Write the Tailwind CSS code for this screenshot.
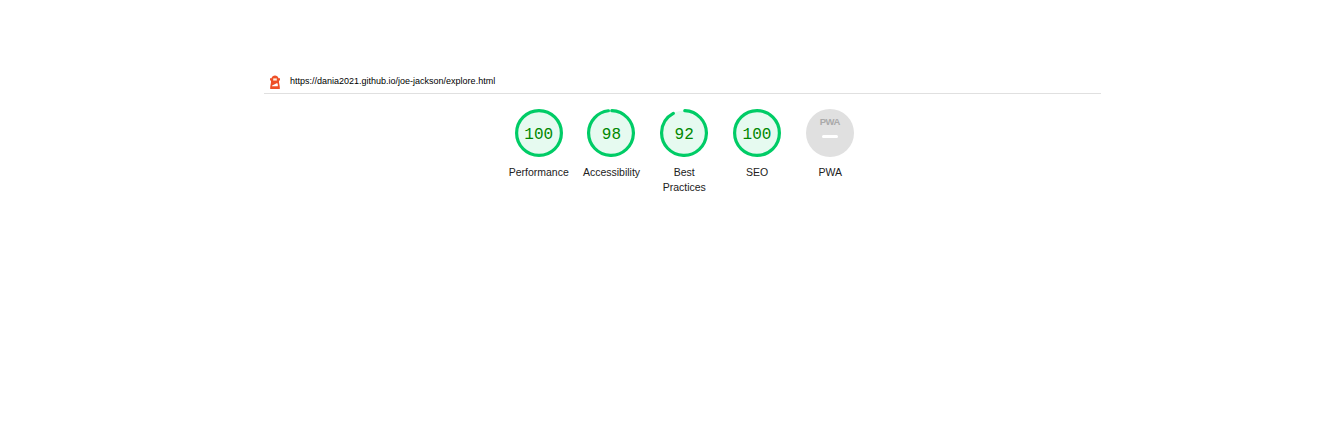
<!DOCTYPE html>
<html lang="en">
<head>
<meta charset="utf-8">
<title>Lighthouse Report</title>
<script src="https://cdn.jsdelivr.net/npm/@tailwindcss/browser@4"></script>
</head>
<body class="h-[425px] overflow-hidden bg-white pt-[69px] font-['Liberation_Sans',Arial,sans-serif] text-[#212121]">
<header class="ml-[264px] flex h-[25px] w-[837px] border-b border-[#e0e0e0]">
  <svg class="ml-[5px] mt-[6px] h-[14px] w-3 shrink-0" viewBox="0 0 12 14">
    <path d="M2 7.200V5.500H1V3.300h1.500C3 1.500 4.300.5 6 .5s3 1 3.500 2.800H11v2.200h-1v1.700l.8 4.800V14H1.200v-2z" fill="#ee5028"/>
    <path d="M4.200 3.400h3.600v2.200H4.200z" fill="#fff0df"/>
    <path d="M3.200 10.500 8.200 8l.6 1.600v1.600H3z" fill="#fff"/>
  </svg>
  <a class="ml-[9px] mt-[5px] whitespace-nowrap text-[9px] leading-[14px] text-black">https://dania2021.github.io/joe-jackson/explore.html</a>
</header>
<main class="ml-[502.350px] mt-[15px] flex text-center text-[10.500px] leading-[15px]">
  <section class="flex w-[72.750px] flex-col items-center">
    <div class="grid size-12 place-items-center">
      <svg class="col-start-1 row-start-1 size-12" viewBox="0 0 48 48"><circle cx="24" cy="24" r="22.400" fill="#e6faf0" stroke="#00cc66" stroke-width="3.200"/></svg>
      <span class="col-start-1 row-start-1 pt-[3px] font-['Liberation_Mono',monospace] text-base leading-none text-[#008800]">100</span>
    </div>
    <h2 class="mt-2">Performance</h2>
  </section>
  <section class="flex w-[72.750px] flex-col items-center">
    <div class="grid size-12 place-items-center">
      <svg class="col-start-1 row-start-1 size-12" viewBox="0 0 48 48"><circle cx="24" cy="24" r="22.400" fill="#e6faf0"/><circle cx="24" cy="24" r="22.400" fill="none" stroke="#00cc66" stroke-width="3.200" stroke-linecap="round" stroke-dasharray="136.300 141" transform="rotate(-87.950 24 24)"/></svg>
      <span class="col-start-1 row-start-1 pt-[3px] font-['Liberation_Mono',monospace] text-base leading-none text-[#008800]">98</span>
    </div>
    <h2 class="mt-2">Accessibility</h2>
  </section>
  <section class="flex w-[72.750px] flex-col items-center">
    <div class="grid size-12 place-items-center">
      <svg class="col-start-1 row-start-1 size-12" viewBox="0 0 48 48"><circle cx="24" cy="24" r="22.400" fill="#e6faf0"/><circle cx="24" cy="24" r="22.400" fill="none" stroke="#00cc66" stroke-width="3.200" stroke-linecap="round" stroke-dasharray="127.900 141" transform="rotate(-87.950 24 24)"/></svg>
      <span class="col-start-1 row-start-1 pt-[3px] font-['Liberation_Mono',monospace] text-base leading-none text-[#008800]">92</span>
    </div>
    <h2 class="mt-2">Best<br>Practices</h2>
  </section>
  <section class="flex w-[72.750px] flex-col items-center">
    <div class="grid size-12 place-items-center">
      <svg class="col-start-1 row-start-1 size-12" viewBox="0 0 48 48"><circle cx="24" cy="24" r="22.400" fill="#e6faf0" stroke="#00cc66" stroke-width="3.200"/></svg>
      <span class="col-start-1 row-start-1 pt-[3px] font-['Liberation_Mono',monospace] text-base leading-none text-[#008800]">100</span>
    </div>
    <h2 class="mt-2">SEO</h2>
  </section>
  <section class="flex w-[72.750px] flex-col items-center">
    <div class="flex size-12 flex-col items-center rounded-full bg-[#e0e0e0] pt-[9px]">
      <span class="text-[9.500px] font-bold leading-[8px] tracking-[-0.600px] text-[#aaa]">PWA</span>
      <span class="mt-[9px] h-[3px] w-4 rounded-full bg-white"></span>
    </div>
    <h2 class="mt-2 pl-px">PWA</h2>
  </section>
</main>
</body>
</html>
